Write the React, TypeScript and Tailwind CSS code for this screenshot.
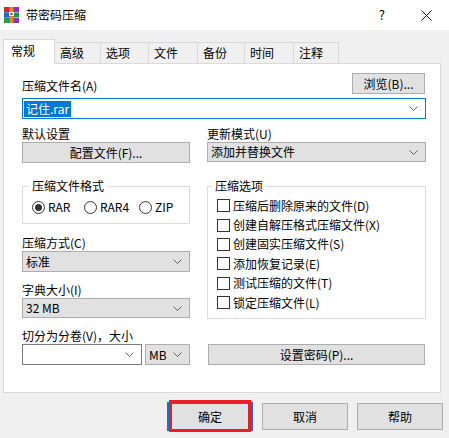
import React from 'react';

const font = "font-['Noto_Sans_CJK_SC','Microsoft_YaHei',sans-serif]";

const RarIcon = () => (
  <svg width="15" height="16" viewBox="0 0 15 16" className="shrink-0">
    {/* three stacked books */}
    <rect x="0" y="0" width="15" height="5" fill="#8b2fc9" />
    <rect x="0" y="0" width="5" height="5" fill="#d3243a" />
    <rect x="0" y="5.5" width="15" height="5" fill="#1d8f4e" />
    <rect x="0" y="5.5" width="5" height="5" fill="#2563d8" />
    <rect x="0" y="11" width="15" height="5" fill="#3a4fd0" />
    <rect x="0" y="11" width="5" height="5" fill="#22a050" />
    <rect x="10" y="11" width="5" height="5" fill="#8b2fc9" />
    {/* strap */}
    <rect x="5.5" y="0" width="4" height="16" fill="#e3862b" />
    <rect x="5" y="5" width="5" height="4" fill="#f4f1ea" />
    <rect x="6.5" y="6" width="2" height="2" fill="#c0392b" />
  </svg>
);

const Chevron = () => (
  <svg width="9" height="5" viewBox="0 0 9 5" className="shrink-0">
    <path d="M0.5 0.5 L4.5 4.5 L8.5 0.5" fill="none" stroke="#606060" strokeWidth="1" />
  </svg>
);

const Button: React.FC<{ label: string; className?: string }> = ({ label, className = '' }) => (
  <div className={`flex items-center justify-center border border-[#adadad] bg-[#e1e1e1] ${className}`}>
    {label}
  </div>
);

const Select: React.FC<{ value: string; className?: string }> = ({ value, className = '' }) => (
  <div className={`flex items-center justify-between border border-[#adadad] bg-[#e1e1e1] pl-[3px] pr-[7px] ${className}`}>
    <span>{value}</span>
    <Chevron />
  </div>
);

const Radio: React.FC<{ label: string; checked?: boolean; className?: string }> = ({ label, checked, className = '' }) => (
  <div className={`flex items-center gap-[3px] ${className}`}>
    <span className="flex h-[13px] w-[13px] items-center justify-center rounded-full border border-[#333333] bg-white">
      {checked && <span className="h-[7px] w-[7px] rounded-full bg-[#333333]" />}
    </span>
    <span>{label}</span>
  </div>
);

const Check: React.FC<{ label: string }> = ({ label }) => (
  <div className="flex h-[19.4px] items-center gap-[3px]">
    <span className="h-[13px] w-[13px] border border-[#333333] bg-white" />
    <span>{label}</span>
  </div>
);

const tabs = [
  { name: '高级', w: 'w-[46px]' },
  { name: '选项', w: 'w-[48px]' },
  { name: '文件', w: 'w-[49px]' },
  { name: '备份', w: 'w-[47px]' },
  { name: '时间', w: 'w-[49px]' },
  { name: '注释', w: 'w-[45px]' },
];

const options = [
  '压缩后删除原来的文件(D)',
  '创建自解压格式压缩文件(X)',
  '创建固实压缩文件(S)',
  '添加恢复记录(E)',
  '测试压缩的文件(T)',
  '锁定压缩文件(L)',
];

export default function App() {
  return (
    <div className={`flex h-[438px] w-[449px] flex-col overflow-hidden bg-[#f0f0f0] text-[12px] leading-[16px] text-black ${font}`}>
      {/* title bar */}
      <div className="flex h-[30px] shrink-0 items-center bg-white pl-[4px]">
        <RarIcon />
        <span className="ml-[7px]">带密码压缩</span>
        <span className="ml-auto text-[13px]">?</span>
        <svg width="11" height="11" viewBox="0 0 11 11" className="ml-[36px] mr-[17px]">
          <path d="M0.5 0.5 L10.5 10.5 M10.5 0.5 L0.5 10.5" stroke="#111" strokeWidth="1" />
        </svg>
      </div>

      <div className="pl-[3px] pt-[9px]">
        {/* tabs */}
        <div className="flex h-[24px] items-end">
          <div className="relative z-10 -mb-px h-[25px] w-[52px] border-x border-t border-[#d9d9d9] bg-white pl-[7px] pt-[3px]">
            常规
          </div>
          {tabs.map(t => (
            <div key={t.name} className={`h-[21px] ${t.w} border-r border-t border-[#d9d9d9] pl-[5px] pt-[2px]`}>
              {t.name}
            </div>
          ))}
        </div>

        {/* panel */}
        <div className="h-[330px] w-[438px] border border-[#d9d9d9] bg-white pl-[18px] pt-[9px]">
          <div className="w-[404px]">
            <div className="flex items-end justify-between">
              <span>压缩文件名(A)</span>
              <Button label="浏览(B)..." className="mr-[1px] h-[21px] w-[73px]" />
            </div>
            <div className="mt-[4px] flex h-[21px] items-center justify-between border border-[#0078d7] bg-white pr-[7px]">
              <span className="ml-[1px] bg-[#0078d7] px-[2px] text-white">记住.rar</span>
              <Chevron />
            </div>

            <div className="mt-[7px] grid grid-cols-[168px_219px] items-start gap-x-[17px]">
              {/* left column */}
              <div className="flex flex-col">
                <span>默认设置</span>
                <Button label="配置文件(F)..." className="h-[21px]" />
                <fieldset className="mt-[15px] border border-[#dcdcdc] pb-[8px] pl-[6px]">
                  <legend className="px-[3px]">压缩文件格式</legend>
                  <div className="ml-[3px] mt-[5px] flex h-[16px] items-center">
                    <Radio label="RAR" checked className="w-[52px]" />
                    <Radio label="RAR4" className="w-[55px]" />
                    <Radio label="ZIP" />
                  </div>
                </fieldset>
                <span className="mt-[11px]">压缩方式(C)</span>
                <Select value="标准" className="h-[21px]" />
                <span className="mt-[10px]">字典大小(I)</span>
                <Select value="32 MB" className="h-[20px]" />
              </div>

              {/* right column */}
              <div className="flex flex-col">
                <span>更新模式(U)</span>
                <Select value="添加并替换文件" className="h-[20px]" />
                <fieldset className="mt-[16px] border border-[#dcdcdc] pb-[6px] pl-[4px]">
                  <legend className="px-[3px]">压缩选项</legend>
                  <div className="ml-[5px] pt-[2px]">
                    {options.map(o => (
                      <Check key={o} label={o} />
                    ))}
                  </div>
                </fieldset>
              </div>
            </div>

            <div className="mt-[9px]">切分为分卷(V)，大小</div>
            <div className="flex h-[21px] items-stretch">
              <div className="flex w-[120px] items-center justify-end border border-[#7a7a7a] bg-white pr-[7px]">
                <Chevron />
              </div>
              <Select value="MB" className="ml-[3px] w-[45px]" />
              <Button label="设置密码(P)..." className="ml-auto mr-[1px] w-[217px]" />
            </div>
          </div>
        </div>
      </div>

      {/* dialog buttons */}
      <div className="mt-[9px] flex h-[29px] items-center justify-end gap-[9px] pr-[6px]">
        <div className="relative h-[29px] w-[86px]">
          <div className="flex h-full w-full items-center justify-center border-2 border-[#0078d7] bg-[#e1e1e1]">确定</div>
          <div className="absolute bottom-[-1px] left-[2px] right-[2px] top-[-2px] border-[3px] border-[#ed1c24]" />
        </div>
        <Button label="取消" className="h-[27px] w-[86px]" />
        <Button label="帮助" className="h-[27px] w-[86px]" />
      </div>
    </div>
  );
}
